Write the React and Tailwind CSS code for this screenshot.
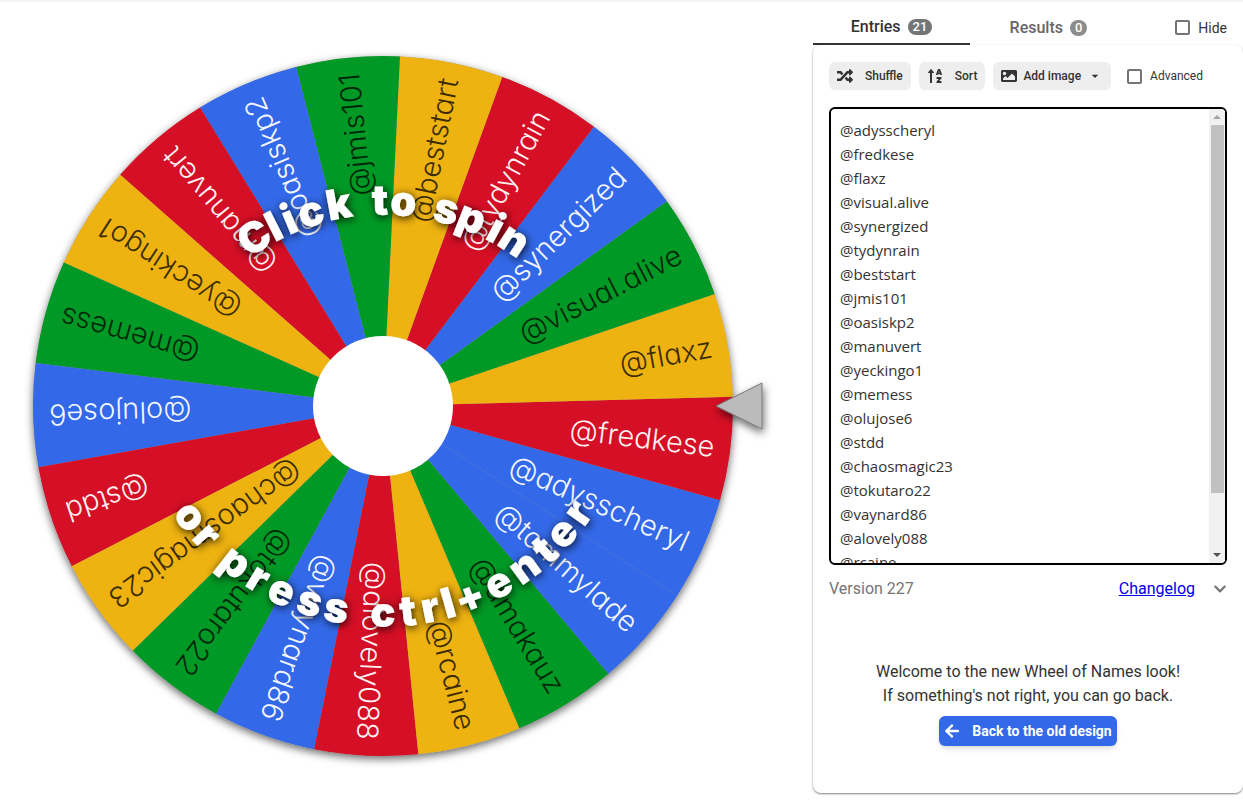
import React from 'react';
import { FaArrowLeft, FaChevronDown, FaImage, FaRandom, FaSortAlphaUp } from 'react-icons/fa';
import { MdArrowDropDown } from 'react-icons/md';

const entries = [
  '@adysscheryl',
  '@fredkese',
  '@flaxz',
  '@visual.alive',
  '@synergized',
  '@tydynrain',
  '@beststart',
  '@jmis101',
  '@oasiskp2',
  '@manuvert',
  '@yeckingo1',
  '@memess',
  '@olujose6',
  '@stdd',
  '@chaosmagic23',
  '@tokutaro22',
  '@vaynard86',
  '@alovely088',
  '@rcaine',
  '@amakauz',
  '@tommylade',
];

const BLUE = '#3369e8';
const RED = '#d50f25';
const YELLOW = '#eeb211';
const GREEN = '#009925';
const wheelColors = [BLUE, RED, YELLOW, GREEN];

const RADIUS = 350;
const SLICE = 360 / entries.length;
const START = 24.2;

// [letter, degrees from the vertical axis]
const topLetters = [
  ['C', -32.2], ['l', -26.9], ['i', -22.9], ['c', -17.5], ['k', -10.5], [' ', -5],
  ['t', -0.7], ['o', 4.9], [' ', 10],
  ['s', 15.3], ['p', 21.6], ['i', 27.9], ['n', 33],
];

const bottomLetters = [
  ['o', 53.5], ['r', 47.4], [' ', 43],
  ['p', 38.1], ['r', 31.4], ['e', 25], ['s', 17.8], ['s', 11.2], [' ', 6],
  ['c', 0], ['t', -6], ['r', -11.4], ['l', -15.9], ['+', -21.2],
  ['e', -28.8], ['n', -36.2], ['t', -42.6], ['e', -48.4], ['r', -54.6],
];

const point = (radius, deg) => {
  const rad = (deg * Math.PI) / 180;
  return `${(radius * Math.cos(rad)).toFixed(2)} ${(radius * Math.sin(rad)).toFixed(2)}`;
};

const slicePath = (mid) =>
  `M0 0 L${point(RADIUS, mid - SLICE / 2)} A${RADIUS} ${RADIUS} 0 0 1 ${point(RADIUS, mid + SLICE / 2)} Z`;

const hasLightText = (i) => i % 4 < 2 || i === entries.length - 1;

// The arcs are a little flatter than the wheel, so their centres are shifted
const ArcText = ({ letters, center, y }) => (
  <g
    className="font-[Inter,sans-serif] text-[42px] font-black"
    fill="#fff"
    textAnchor="middle"
    transform={`translate(0 ${center})`}
  >
    {letters.map(([letter, angle], i) => (
      <text key={i} y={y} transform={`rotate(${angle})`}>
        {letter}
      </text>
    ))}
  </g>
);

const Wheel = () => (
  <svg viewBox="-383 -404 813 800" className="w-full" role="img" aria-label="Wheel of names">
    <defs>
      <filter id="wheelShadow" x="-10%" y="-10%" width="120%" height="120%">
        <feDropShadow dx="0" dy="3" stdDeviation="4" floodColor="#000" floodOpacity="0.6" />
      </filter>
      <filter id="pointerShadow" x="-50%" y="-50%" width="200%" height="200%">
        <feDropShadow dx="1" dy="4" stdDeviation="4" floodColor="#000" floodOpacity="0.6" />
      </filter>
      <filter id="textShadow" x="-10%" y="-20%" width="120%" height="150%">
        <feDropShadow dx="1" dy="2" stdDeviation="4" floodColor="#000" floodOpacity="0.9" />
      </filter>
    </defs>

    {/* Slices */}
    <circle r={RADIUS} fill="#999" filter="url(#wheelShadow)" />
    {entries.map((entry, i) => (
      <path
        key={entry}
        d={slicePath(START - i * SLICE)}
        fill={i === entries.length - 1 ? BLUE : wheelColors[i % 4]}
      />
    ))}

    {/* Names */}
    <g className="font-[Inter,sans-serif] text-[29px] font-light [font-feature-settings:'cv11']" textAnchor="end">
      {entries.map((entry, i) => (
        <text
          key={entry}
          x="334"
          y="10"
          fill={hasLightText(i) ? '#fff' : '#000'}
          fillOpacity={hasLightText(i) ? 0.95 : 0.75}
          transform={`rotate(${START - i * SLICE})`}
        >
          {entry}
        </text>
      ))}
    </g>

    <circle r="70" fill="#fff" />

    {/* Overlay text */}
    <g filter="url(#textShadow)">
      <ArcText letters={topLetters} center={36} y={-227} />
      <ArcText letters={bottomLetters} center={-32} y={253} />
    </g>

    {/* Pointer */}
    <path d="M333 0 L379 -23 V23 Z" fill="#bbb" stroke="#777" filter="url(#pointerShadow)" />
  </svg>
);

const ScrollBar = () => (
  <div
    aria-hidden="true"
    className="absolute inset-y-0.5 right-0.5 flex w-4 flex-col items-center rounded-r-sm bg-[#f1f1f1]"
  >
    <div className="flex h-4 items-center">
      <div className="border-x-4 border-b-4 border-x-transparent border-b-[#a3a3a3]" />
    </div>
    <div className="w-[13px] flex-[368] bg-[#c1c1c1]" />
    <div className="flex-[54]" />
    <div className="flex h-4 items-center">
      <div className="border-x-4 border-t-4 border-x-transparent border-t-[#505050]" />
    </div>
  </div>
);

const toolButton = 'flex h-7 items-center rounded-md bg-[#eee] px-2 text-xs font-medium text-[#333]';
const checkbox = 'h-[15px] w-[15px] appearance-none rounded-xs border-2 border-[#757575] bg-white';

const App = () => {
  return (
    <div className="border-t-2 border-gray-100 bg-white font-[Roboto,sans-serif] text-[#333]">
      <div className="grid grid-cols-[minmax(0,813fr)_minmax(0,430fr)]">
        {/* Wheel */}
        <main>
          <Wheel />
        </main>

        <aside>
          {/* Tabs */}
          <div className="flex h-[43px] items-stretch pr-4">
            <button className="flex w-[157px] items-center justify-center gap-[7px] border-b-2 border-[#333] pt-2 font-medium">
              Entries
              <span className="rounded-full bg-[#757575] px-[5px] text-[13px] leading-4 text-white">21</span>
            </button>
            <button className="flex w-[157px] items-center justify-center gap-[7px] pt-2 font-medium text-[#666]">
              Results
              <span className="rounded-full bg-[#8c8c8c] px-[5px] text-[13px] leading-4 text-white">0</span>
            </button>
            <label className="ml-auto flex items-center gap-2 pt-2 text-sm">
              <input type="checkbox" className={checkbox} />
              Hide
            </label>
          </div>

          <div className="rounded-lg px-4 pt-[17px] pb-[47px] shadow-[0_1px_2px_rgba(0,0,0,0.5)]">
            {/* Toolbar */}
            <div className="flex items-center gap-2">
              <button className={`${toolButton} gap-3`}>
                <FaRandom className="h-4 w-4" />
                Shuffle
              </button>
              <button className={`${toolButton} gap-3`}>
                <FaSortAlphaUp className="h-4 w-4" />
                Sort
              </button>
              <button className={`${toolButton} gap-1.5`}>
                <FaImage className="h-4 w-4" />
                Add image
                <MdArrowDropDown className="h-4 w-4" />
              </button>
              <label className="ml-2 flex items-center gap-2 text-xs">
                <input type="checkbox" className={checkbox} />
                Advanced
              </label>
            </div>

            {/* Entries */}
            <div className="relative mt-[17px]">
              <textarea
                aria-label="Entries"
                defaultValue={entries.join('\n')}
                className="block h-[458px] w-full resize-none rounded-md border-2 border-black px-[9px] py-[9px] font-['Open_Sans',sans-serif] text-[15px] leading-6 outline-none [scrollbar-width:none]"
              />
              <ScrollBar />
            </div>

            <div className="mt-3 flex items-center">
              <span className="text-[#757575]">Version 227</span>
              <a href="#changelog" className="ml-auto text-[#0000ee] underline">
                Changelog
              </a>
              <button aria-label="Expand" className="ml-[18px]">
                <FaChevronDown className="h-3.5 w-3.5 text-[#757575]" />
              </button>
            </div>

            <div className="mt-[59px] flex flex-col items-center text-center">
              <p>Welcome to the new Wheel of Names look!</p>
              <p>If something's not right, you can go back.</p>
              <button className="mt-2 flex h-[30px] items-center gap-3 rounded-md bg-[#3369e8] px-[5px] text-sm font-bold text-white shadow-md">
                <FaArrowLeft className="h-4 w-4" />
                Back to the old design
              </button>
            </div>
          </div>
        </aside>
      </div>
    </div>
  );
};

export default App;
